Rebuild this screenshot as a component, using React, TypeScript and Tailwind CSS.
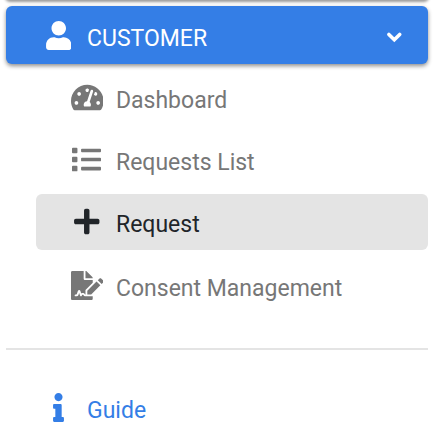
import type { ReactNode } from 'react';
import {
  FaFileSignature,
  FaInfo,
  FaList,
  FaPlus,
  FaTachometerAlt,
  FaUser,
} from 'react-icons/fa';

type ItemProps = { icon: ReactNode; label: string; active?: boolean };

function SubItem({ icon, label, active = false }: ItemProps) {
  return (
    <a
      className={`flex h-14 items-center rounded-md pl-[34.7px] ${
        active ? 'bg-[#e4e4e4] text-[#212529]' : 'text-[#777777]'
      }`}
    >
      <span className="-mt-0.5 flex w-[32.6px] justify-center">{icon}</span>
      <span className="ml-[12.7px] mt-[5px] leading-7">{label}</span>
    </a>
  );
}

function Chevron() {
  return (
    <svg
      viewBox="0 0 16 12"
      className="h-3 w-4"
      fill="none"
      stroke="currentColor"
      strokeWidth="3.5"
      strokeLinecap="round"
    >
      <path d="M2.9 3.4l5.4 5.4 5.4-5.4" />
    </svg>
  );
}

export default function App() {
  return (
    <nav className="h-[446px] w-[434px] overflow-hidden bg-white px-1.5 font-['Roboto',sans-serif] text-[23px]">
      <div className="-mt-2 h-2 rounded-md shadow-[0_1px_3px_1px_rgba(0,0,0,0.4)]" />
      <a className="mt-1.5 flex h-[58px] items-center rounded-md bg-[#347ee6] pl-[35px] pr-[26px] text-white shadow-[0_2px_4px_rgba(0,0,0,0.45)]">
        <span className="flex w-[34px] justify-center">
          <FaUser className="ml-px h-[29px] w-[25.5px]" />
        </span>
        <span className="ml-3 mt-[7px] leading-7">CUSTOMER</span>
        <span className="ml-auto mt-1">
          <Chevron />
        </span>
      </a>
      <div className="mt-[6px] flex flex-col gap-1.5 pl-[30px]">
        <SubItem icon={<FaTachometerAlt className="h-[29px] w-[32.6px] shrink-0" />} label="Dashboard" />
        <SubItem icon={<FaList className="h-[29px] w-[29px]" />} label="Requests List" />
        <SubItem icon={<FaPlus className="h-[29px] w-[25.5px]" />} label="Request" active />
        <div className="mt-0.5">
          <SubItem icon={<FaFileSignature className="h-[29px] w-[32.6px] shrink-0" />} label="Consent Management" />
        </div>
      </div>
      <hr className="mt-[34px] border-0 border-t-2 border-[#e4e4e4]" />
      <a className="mt-7 flex h-[58px] items-center pl-[35px] text-[#347ee6]">
        <span className="flex w-[34px] justify-center">
          <FaInfo className="h-[29px] w-[11px]" />
        </span>
        <span className="ml-3 mt-[7px] leading-7">Guide</span>
      </a>
    </nav>
  );
}
